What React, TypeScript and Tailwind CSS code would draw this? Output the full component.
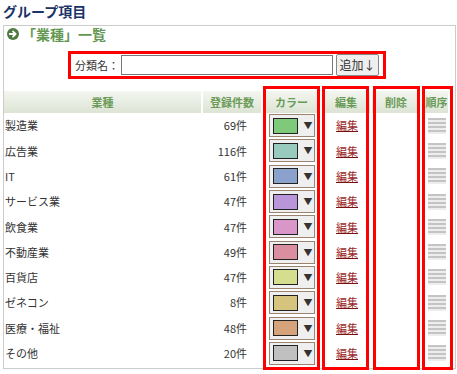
import React from 'react'

const rows = [
    { name: '製造業', count: '69件', color: '#7ec97a' },
    { name: '広告業', count: '116件', color: '#98cbbd' },
    { name: 'IT', count: '61件', color: '#8aa2cb' },
    { name: 'サービス業', count: '47件', color: '#b995d9' },
    { name: '飲食業', count: '47件', color: '#d997c9' },
    { name: '不動産業', count: '49件', color: '#d98fa0' },
    { name: '百貨店', count: '47件', color: '#d5dd8f' },
    { name: 'ゼネコン', count: '8件', color: '#d6c47e' },
    { name: '医療・福祉', count: '48件', color: '#d6a27c' },
    { name: 'その他', count: '20件', color: '#c0c0c0' },
]

const headers = [
    { label: '業種', pad: '' },
    { label: '登録件数', pad: '' },
    { label: 'カラー', pad: '' },
    { label: '編集', pad: '' },
    { label: '削除', pad: '' },
    { label: '順序', pad: 'pl-[3px]' },
]

const Handle = () => (
    <svg width="18" height="16" viewBox="0 0 18 16">
        {Array(8).fill(0).map((_, i) => (
            <rect key={i} x="0" y={i * 2} width="18" height="2" fill={i % 2 === 0 ? '#c4c4c4' : '#ededed'} />
        ))}
    </svg>
)

const ArrowIcon = () => (
    <svg width="12" height="12" viewBox="0 0 12 12">
        <circle cx="6" cy="6" r="6" fill="#4d7a40" />
        <path d="M2.8 6h5M6 3.4L8.6 6 6 8.6" stroke="#fff" strokeWidth="1.8" fill="none" strokeLinecap="round" strokeLinejoin="round" />
    </svg>
)

const App = () => {
    return (
        <div className="relative w-[457px] h-[374px] overflow-hidden bg-white text-[#333] font-['Noto_Sans_CJK_JP',sans-serif]">

            {/* TITLE */}
            <h1 className="pl-[3px] pt-[1px] h-[25px] text-[14px] leading-[20px] font-bold text-[#1b3266]">
                グループ項目
            </h1>

            {/* PANEL */}
            <div className="ml-[3px] w-[453px] h-[344px] border border-[#cccccc]">

                {/* SECTION HEADING */}
                <div className="flex items-center h-[16px] pl-[3px] gap-[3px]">
                    <ArrowIcon />
                    <span className="text-[14px] leading-[16px] font-bold text-[#649852]">「業種」一覧</span>
                </div>

                {/* FILTER */}
                <div className="flex items-center h-[22px] mt-[12px] pl-[71px]">
                    <span className="w-[46px] text-[11px] text-[#333]">分類名：</span>
                    <div className="w-[212px] h-[20px] border border-[#777] bg-white"></div>
                    <button className="ml-[3px] w-[43px] h-[22px] border border-[#888] rounded-[2px] bg-[#efefef] text-[12px] leading-[20px] text-[#333]">
                        追加↓
                    </button>
                </div>

                {/* TABLE */}
                <div className="mt-[15px] grid grid-cols-[197px_58px_57px_48px_48px_26px] gap-x-[2px]">
                    {headers.map((h) => (
                        <div key={h.label} className={`h-[22px] flex items-center justify-center whitespace-nowrap bg-gradient-to-b from-[#f4f6f0] to-[#dce4d4] text-[11px] font-bold text-[#6a9b58] ${h.pad}`}>
                            {h.label}
                        </div>
                    ))}

                    {rows.map((r) => (
                        <React.Fragment key={r.name}>
                            <div className="h-[25.3px] flex items-center pl-[1px] text-[11px]">{r.name}</div>
                            <div className="h-[25.3px] flex items-center justify-end pr-[14px] text-[11px]">{r.count}</div>
                            <div className="h-[25.3px] flex items-center justify-center">
                                <div className="w-[46px] h-[23px] flex items-center pl-[3px] border border-[#9a8470] bg-[#efefef]">
                                    <div className="w-[25px] h-[16px] border border-[#222]" style={{ backgroundColor: r.color }}></div>
                                    <span className="ml-[6px] text-[9px] leading-none text-[#333]">▼</span>
                                </div>
                            </div>
                            <div className="h-[25.3px] flex items-center justify-center pl-[2px]">
                                <a className="text-[11px] text-[#9a2828] underline decoration-[#7a1010]">編集</a>
                            </div>
                            <div className="h-[25.3px]"></div>
                            <div className="h-[25.3px] flex items-center justify-center pl-[3px]">
                                <Handle />
                            </div>
                        </React.Fragment>
                    ))}
                </div>
            </div>

            {/* RED ANNOTATIONS */}
            <div className="absolute left-[68px] top-[51px] w-[318px] h-[28px] border-[3px] border-[#ff0000]"></div>
            <div className="absolute left-[263px] top-[86px] w-[57px] h-[284px] border-[3px] border-[#ff0000]"></div>
            <div className="absolute left-[322px] top-[86px] w-[47px] h-[284px] border-[3px] border-[#ff0000]"></div>
            <div className="absolute left-[373px] top-[86px] w-[47px] h-[284px] border-[3px] border-[#ff0000]"></div>
            <div className="absolute left-[422px] top-[86px] w-[31px] h-[284px] border-[3px] border-[#ff0000]"></div>
        </div>
    )
}

export default App
